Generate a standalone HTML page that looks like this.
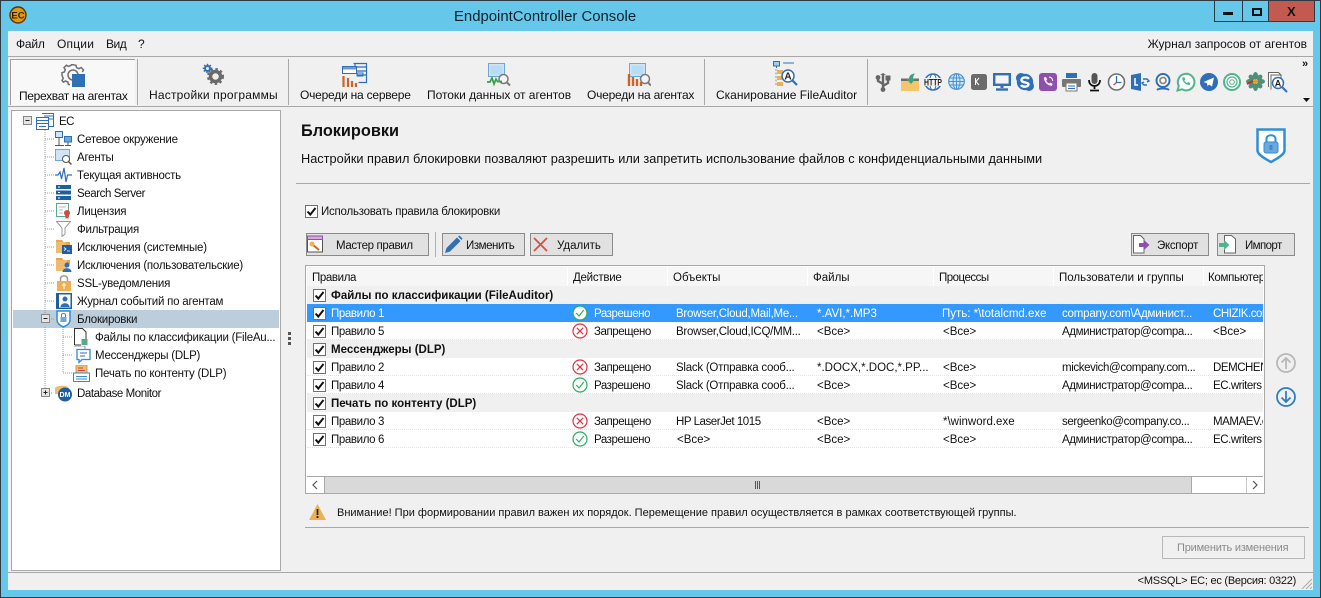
<!DOCTYPE html>
<html><head><meta charset="utf-8"><style>
html,body{margin:0;padding:0;background:#65c8ea;overflow:hidden}
#w{position:relative;width:1321px;height:598px;background:#65c8ea;overflow:hidden;font-family:"Liberation Sans",sans-serif;font-size:12px;color:#111}
#w div,#w span,#w svg{position:absolute}
.t{white-space:nowrap;line-height:18px;height:18px}
.n{font-size:11.5px;letter-spacing:-.23px;margin-top:1px}
.s{font-size:11.5px;margin-top:1px}
.x{letter-spacing:-.38px}
.y{letter-spacing:-.25px}
.c{width:50px;overflow:hidden;letter-spacing:-.45px}
.b{background:#e1e1e1;border:1px solid #8a8a8a;box-sizing:border-box;height:23px}
.h{background:#f6f6f6;top:267px;height:19px}
.g{background:#f0f0f0;left:307px;width:956px;height:18px}
.r{left:307px;width:956px;height:17px;background:#fff;border-bottom:1px dotted #e4e4e4}
.w{color:#fff}
.bo{font-weight:bold}
</style></head><body><div id="w">
<svg width="0" height="0" style="left:0;top:0"><defs>
<symbol id="cb" viewBox="0 0 13 13"><rect x=".5" y=".5" width="12" height="12" fill="#fff" stroke="#707070"/><path d="M2.6 6.6l2.7 3L10.500 3" fill="none" stroke="#111" stroke-width="2"/></symbol>
<symbol id="ok" viewBox="0 0 16 16"><circle cx="8" cy="8" r="7" fill="#fff" stroke="#27ae60" stroke-width="1.2"/><path d="M4.2 8l2.8 3 4.8-6" fill="none" stroke="#27ae60" stroke-width="1.1"/></symbol>
<symbol id="no" viewBox="0 0 16 16"><circle cx="8" cy="8" r="7" fill="#fff" stroke="#e0323c" stroke-width="1.2"/><path d="M4.8 4.8l6.4 6.4M11.2 4.8l-6.4 6.4" fill="none" stroke="#e0323c" stroke-width="1.2"/></symbol>
</defs></svg>

<!-- window frame -->
<div style="left:0;top:0;width:1321px;height:1px;background:#2f3b44"></div>
<div style="left:0;top:0;width:1px;height:598px;background:#2f3b44"></div>
<div style="left:1320px;top:0;width:1px;height:598px;background:#2f3b44"></div>
<div style="left:0;top:597px;width:1321px;height:1px;background:#2f3b44"></div>
<svg style="left:9px;top:6px" width="18" height="18" viewBox="0 0 18 18"><circle cx="9" cy="9" r="8" fill="#e09a10" stroke="#5c3500" stroke-width="1.400"/><text x="9" y="12.500" text-anchor="middle" font-family="Liberation Sans" font-size="9.500" font-weight="bold" fill="#3a2000">EC</text></svg>
<div class="t" style="left:454px;top:7px;font-size:14.9px;line-height:20px;height:20px;color:#10202a">EndpointController Console</div>
<div style="left:1214px;top:1px;width:101px;height:21px;border:1px solid #2f3b44;border-top:0;box-sizing:border-box"></div>
<div style="left:1242px;top:1px;width:1px;height:20px;background:#2f3b44"></div>
<div style="left:1268px;top:1px;width:47px;height:21px;background:#c25a50;border-left:1px solid #2f3b44;border-right:1px solid #2f3b44;border-bottom:1px solid #2f3b44;box-sizing:border-box"></div>
<div style="left:1223px;top:12px;width:10px;height:3px;background:#111"></div>
<div style="left:1252px;top:8px;width:6px;height:4px;border:2px solid #111"></div>
<div class="bo" style="left:1287px;top:4px;font-size:13px;line-height:16px;color:#111">X</div>

<!-- client -->
<div style="left:8px;top:31px;width:1305px;height:559px;background:#f0f0f0"></div>
<div class="t" style="left:16px;top:35px;letter-spacing:-.2px">Файл</div>
<div class="t" style="left:57px;top:35px;letter-spacing:.2px">Опции</div>
<div class="t" style="left:106px;top:35px;letter-spacing:-.5px">Вид</div>
<div class="t" style="left:138px;top:35px">?</div>
<div class="t" style="right:14px;top:35px">Журнал запросов от агентов</div>
<div style="left:8px;top:56px;width:1305px;height:1px;background:#a8a8a8"></div>
<div style="left:8px;top:106px;width:1305px;height:1px;background:#a8a8a8"></div>

<!-- toolbar -->
<div style="left:10px;top:59px;width:125px;height:46px;background:#f8f8f8;border-top:1px solid #a0a0a0;border-left:1px solid #a0a0a0;box-sizing:border-box"></div>
<div style="left:137px;top:59px;width:1px;height:46px;background:#a8a8a8"></div>
<div style="left:288px;top:59px;width:1px;height:46px;background:#a8a8a8"></div>
<div style="left:704px;top:59px;width:1px;height:46px;background:#a8a8a8"></div>
<div style="left:867px;top:59px;width:1px;height:46px;background:#a8a8a8"></div>
<div class="t" style="left:19px;top:87px;letter-spacing:-.32px">Перехват на агентах</div>
<div class="t" style="left:149px;top:86px;letter-spacing:.21px">Настройки программы</div>
<div class="t" style="left:300px;top:86px;letter-spacing:-.22px">Очереди на сервере</div>
<div class="t" style="left:427px;top:86px;letter-spacing:-.04px">Потоки данных от агентов</div>
<div class="t" style="left:587px;top:86px;letter-spacing:-.22px">Очереди на агентах</div>
<div class="t" style="left:716px;top:86px">Сканирование FileAuditor</div>

<svg style="left:60px;top:62px" width="26" height="26" viewBox="0 0 26 26"><path d="M14 3l2 .3.600 2.400 2.400 1 2.100-1.200 2.400 2.400-1.200 2.100M10 22.500H8.400l-.5-2.500-2.400-1-2 1.200L2 18.500l1.200-2.100-.9-2.300L2 13.500V10.700l2.300-.7 1-2.300L4 5.600l2.400-2.400 2.100 1.200 2.300-.9L11.400 2.800H14" fill="none" stroke="#6e6e6e" stroke-width="1.500"/><circle cx="13" cy="13" r="5" fill="none" stroke="#6e6e6e" stroke-width="1.500"/><rect x="12" y="12" width="13" height="13" fill="#2f6fb5"/></svg>
<svg style="left:202px;top:63px" width="22" height="22" viewBox="0 0 22 22"><circle cx="13.500" cy="13.500" r="5" fill="none" stroke="#6a6a6a" stroke-width="3.500"/><circle cx="13.500" cy="13.500" r="7.500" fill="none" stroke="#6a6a6a" stroke-width="2" stroke-dasharray="2.500 2.500"/><circle cx="5.500" cy="5.500" r="2.500" fill="none" stroke="#2f6fb5" stroke-width="2"/><circle cx="5.500" cy="5.500" r="4" fill="none" stroke="#2f6fb5" stroke-width="1.500" stroke-dasharray="1.500 1.500"/></svg>
<svg style="left:342px;top:62px" width="26" height="26" viewBox="0 0 26 26"><path d="M11.500 1.500h13v19h-8M13 1.500v5M13 5h11M15 9h9M15 13h9" fill="none" stroke="#2f6fb5" stroke-width="1.200"/><rect x=".5" y="4.500" width="14" height="7" fill="#fff" stroke="#2f6fb5"/><rect x="1" y="5" width="13" height="2.500" fill="#2f6fb5" opacity=".7"/><rect x="15" y="11" width="6" height="3" fill="none" stroke="#2f6fb5"/><path d="M1.500 14v11M6 16v9M10 19v6M14 21v4" stroke="#c8652a" stroke-width="2.200"/></svg>
<svg style="left:487px;top:62px" width="24" height="26" viewBox="0 0 24 26"><rect x="1.500" y="1.500" width="16" height="13" fill="#cfe5f7" stroke="#6ba8dc"/><rect x="3.500" y="3.500" width="12" height="9" fill="#b6dcf6"/><circle cx="16.500" cy="17" r="4.500" fill="#f4f4f4" stroke="#7a7a7a" stroke-width="1.500"/><path d="M20 20.500l3 3" stroke="#7a7a7a" stroke-width="2"/><path d="M0 20h3l2-4 2 6 2-5 1.500 2.500H15" fill="none" stroke="#35a04a" stroke-width="1.700"/></svg>
<svg style="left:627px;top:62px" width="24" height="26" viewBox="0 0 24 26"><rect x="2.500" y="1.500" width="16" height="13" fill="#cfe5f7" stroke="#6ba8dc"/><rect x="4.500" y="3.500" width="12" height="9" fill="#b6dcf6"/><circle cx="18" cy="17" r="4.500" fill="#f4f4f4" stroke="#7a7a7a" stroke-width="1.500"/><path d="M21 20.500l3 3" stroke="#7a7a7a" stroke-width="2"/><path d="M2 12v12M6 15v9M10 17v7M14 20v4" stroke="#c8652a" stroke-width="2.400"/></svg>
<svg style="left:773px;top:61px" width="26" height="27" viewBox="0 0 26 27"><rect x=".5" y=".5" width="6" height="4.500" fill="#9fcdf0" stroke="#2f6fb5"/><path d="M3.500 5v2M10 2h11" stroke="#2f6fb5"/><path d="M3 8v17" stroke="#999" stroke-dasharray="2 1.500"/><rect x="4" y="9" width="6" height="4" fill="#eeb24c"/><rect x="4" y="15" width="6" height="4" fill="#eeb24c"/><rect x="4" y="21" width="6" height="4" fill="#eeb24c"/><circle cx="15" cy="15" r="6" fill="#fff" stroke="#2f6fb5" stroke-width="1.500"/><text x="15" y="18.500" text-anchor="middle" font-family="Liberation Sans" font-size="10" font-weight="bold" fill="#222">A</text><path d="M19.500 19.500l4.500 4.500" stroke="#2f6fb5" stroke-width="2.200"/></svg>

<!-- small icons -->
<svg style="left:875px;top:73px" width="16" height="19" viewBox="0 0 16 19"><path d="M8 1v16M8 11L3 8V5M8 13l5-3V6" fill="none" stroke="#666" stroke-width="2.400"/><circle cx="8" cy="16.500" r="2.400" fill="#666"/><circle cx="3" cy="4.500" r="2.400" fill="#666"/><rect x="10.500" y="2.500" width="5" height="5" fill="#666"/><path d="M5 2l3-2 3 2z" fill="#666"/></svg>
<svg style="left:901px;top:72px" width="18" height="20" viewBox="0 0 18 20"><path d="M0 7h6v2h12v10H0z" fill="#f5c56c"/><rect y="6.500" width="18" height="2.500" fill="#6d6d6d"/><path d="M14 1.500C9.500 2 8 4 8 7H5.500l4.500 5 4.500-5H12c0-2 .5-3.500 2-5.500z" fill="#3aa37c"/></svg>
<svg style="left:924px;top:73px" width="18" height="18" viewBox="0 0 18 18"><circle cx="9" cy="9" r="8" fill="#fff" stroke="#2f6fb5" stroke-width="1.600"/><ellipse cx="9" cy="9" rx="3.500" ry="8" fill="none" stroke="#2f6fb5"/><rect x="-.5" y="5" width="19" height="8" fill="#f0f0f0"/><text x="9" y="12.500" text-anchor="middle" font-family="Liberation Sans" font-size="9" font-weight="bold" fill="#222" textLength="18" lengthAdjust="spacingAndGlyphs">HTTP</text></svg>
<svg style="left:948px;top:73px" width="17" height="17" viewBox="0 0 17 17"><circle cx="8.500" cy="8.500" r="7.800" fill="#cfe5f7" stroke="#4a93d0" stroke-width="1.200"/><ellipse cx="8.500" cy="8.500" rx="3.500" ry="7.800" fill="none" stroke="#4a93d0"/><path d="M1 8.500h15M2 5h13M2 12h13M8.500 1v15" stroke="#4a93d0"/></svg>
<svg style="left:971px;top:74px" width="16" height="16" viewBox="0 0 16 16"><rect width="16" height="16" rx="2.500" fill="#6a6a6a"/><path d="M4.500 4v7M8 4L5 7.500 8 11" fill="none" stroke="#fff"/></svg>
<svg style="left:993px;top:73px" width="18" height="18" viewBox="0 0 18 18"><rect x="1.200" y="1.200" width="15.600" height="10.600" fill="#f4f4f4" stroke="#2f6fb5" stroke-width="2.400"/><path d="M9 13v2" stroke="#2f6fb5" stroke-width="3"/><path d="M3 16.500h12" stroke="#2f6fb5" stroke-width="2.400"/></svg>
<svg style="left:1016px;top:73px" width="18" height="18" viewBox="0 0 18 18"><circle cx="9" cy="9" r="8.200" fill="#2f6fb5"/><circle cx="5" cy="5" r="5" fill="#2f6fb5"/><circle cx="13" cy="13" r="5" fill="#2f6fb5"/><path d="M13 5.800C11 3.800 5.500 4 5.500 7s7 2 7 4.500S6.500 14.500 5 12" fill="none" stroke="#fff" stroke-width="2.400"/></svg>
<svg style="left:1039px;top:73px" width="18" height="18" viewBox="0 0 18 18"><rect width="18" height="18" rx="3" fill="#8e4fae"/><path d="M5 4.500l2-.5 1.200 2.500-1 1c.5 1.500 1.500 2.500 3 3l1-1 2.400 1.200-.6 2c-4 .5-8.500-4-8-8.300z" fill="#fff"/><path d="M10 4c2 .2 3.500 1.500 3.800 4" fill="none" stroke="#fff"/></svg>
<svg style="left:1062px;top:72px" width="19" height="20" viewBox="0 0 19 20"><rect x="4" y="1" width="11" height="5" fill="#2f6fb5"/><rect x="0" y="7" width="19" height="8" rx="1" fill="#777"/><rect x="4" y="11" width="11" height="8" fill="#fff" stroke="#777"/><path d="M6 14h7M6 16.500h7" stroke="#2f6fb5"/></svg>
<svg style="left:1088px;top:72px" width="13" height="20" viewBox="0 0 13 20"><rect x="3.500" y="1" width="6" height="11" rx="3" fill="#555"/><path d="M1 8c0 8 11 8 11 0M6.500 14v3M2 18.500h9" fill="none" stroke="#111" stroke-width="1.800"/></svg>
<svg style="left:1107px;top:73px" width="19" height="18" viewBox="0 0 19 18"><circle cx="9.500" cy="9" r="8" fill="#fff" stroke="#6e6e6e" stroke-width="1.600"/><path d="M9.500 3v6.500h5" fill="none" stroke="#2f6fb5" stroke-width="1.300"/><path d="M9.500 9.500l-3 2.500" stroke="#d04030" stroke-width="1.300"/></svg>
<svg style="left:1131px;top:73px" width="19" height="18" viewBox="0 0 19 18"><path d="M0 2l10-2v18L0 16z" fill="#2f6fb5"/><path d="M4 5v7h3" fill="none" stroke="#fff" stroke-width="1.500"/><path d="M12 6h4l2 2-2 1M16 12h-3l-2-2 2-1" fill="none" stroke="#2f6fb5" stroke-width="1.400"/></svg>
<svg style="left:1154px;top:73px" width="18" height="18" viewBox="0 0 18 18"><circle cx="9" cy="7.500" r="6.500" fill="#fff" stroke="#2f6fb5" stroke-width="2"/><circle cx="9" cy="7.500" r="3" fill="none" stroke="#888" stroke-width="1.800"/><path d="M3 17c2-2 10-2 12 0" fill="none" stroke="#2f6fb5" stroke-width="2"/></svg>
<svg style="left:1176px;top:72px" width="20" height="20" viewBox="0 0 20 20"><path d="M1.500 18.500l1.300-4.500A8.300 8.300 0 1 1 6 17.300z" fill="#fff" stroke="#4fb58c" stroke-width="2"/><path d="M6.500 5.500l1.800-.5 1 2.500-1 1c.5 1 1.500 2 2.700 2.500l1-1 2.300 1-.4 1.800C10 14 5.500 9 6.500 5.500z" fill="#4fb58c"/></svg>
<svg style="left:1200px;top:73px" width="18" height="18" viewBox="0 0 18 18"><circle cx="9" cy="9" r="9" fill="#2f6fb5"/><path d="M3.500 9L14 4.500l-2 9-3-2-1.500 1.800-.4-3z" fill="#fff"/></svg>
<svg style="left:1223px;top:73px" width="18" height="18" viewBox="0 0 18 18"><circle cx="9" cy="9" r="8" fill="#fff" stroke="#4fb58c" stroke-width="2"/><circle cx="9" cy="9" r="5" fill="none" stroke="#4fb58c" stroke-width="1.200"/><circle cx="9" cy="9" r="2.300" fill="none" stroke="#4fb58c"/></svg>
<svg style="left:1246px;top:72px" width="19" height="19" viewBox="0 0 19 19"><g fill="#4f9078"><ellipse cx="9.500" cy="3.800" rx="2.500" ry="3.800"/><ellipse cx="9.500" cy="15.200" rx="2.500" ry="3.800"/><ellipse cx="3.800" cy="9.500" rx="3.800" ry="2.500"/><ellipse cx="15.200" cy="9.500" rx="3.800" ry="2.500"/><ellipse cx="5.500" cy="5.500" rx="2.500" ry="3.300" transform="rotate(-45 5.500 5.500)"/><ellipse cx="13.500" cy="5.500" rx="2.500" ry="3.300" transform="rotate(45 13.500 5.500)"/><ellipse cx="5.500" cy="13.500" rx="2.500" ry="3.300" transform="rotate(45 5.500 13.500)"/><ellipse cx="13.500" cy="13.500" rx="2.500" ry="3.300" transform="rotate(-45 13.500 13.500)"/></g><circle cx="9.500" cy="9.500" r="2" fill="#e8a020"/><path d="M1 12l6-3" stroke="#c03030" stroke-width="2"/></svg>
<svg style="left:1268px;top:72px" width="21" height="21" viewBox="0 0 21 21"><path d="M.5 15V.5h10l3 3M3 17.500V3h10v4" fill="#fff" stroke="#666"/><circle cx="10" cy="11" r="5.500" fill="#fff" stroke="#2f6fb5" stroke-width="1.500"/><text x="10" y="14.500" text-anchor="middle" font-family="Liberation Sans" font-size="9" font-weight="bold" fill="#222">A</text><path d="M14 15l5 5" stroke="#2f6fb5" stroke-width="2"/></svg>
<div class="bo" style="left:1302px;top:58px;font-size:11px;line-height:12px;letter-spacing:-1px;color:#111">»</div>
<svg style="left:1303px;top:98px" width="7" height="4" viewBox="0 0 7 4"><path d="M0 0h7L3.500 4z" fill="#111"/></svg>

<!-- tree -->
<div style="left:11px;top:110px;width:270px;height:461px;background:#fff;border:1px solid #a8a8a8;box-sizing:border-box"></div>
<div style="left:13px;top:310px;width:266px;height:18px;background:#bccddc"></div>
<svg style="left:20px;top:112px" width="60" height="290" viewBox="0 0 60 290"><g stroke="#999" stroke-dasharray="1 1" fill="none"><path d="M25 18v190M25 27h10M25 45h10M25 63h10M25 81h10M25 99h10M25 117h10M25 135h10M25 153h10M25 171h10M25 189h10M25 207h10M43 215v46M43 225h10M43 243h10M43 261h10"/><path d="M25 215v66M25 281h8"/></g><g fill="#fff" stroke="#888"><rect x="3.500" y="4.500" width="8" height="8" fill="#e4e4e4"/><rect x="21.500" y="202.500" width="8" height="8" fill="#e4e4e4"/><rect x="21.500" y="276.500" width="8" height="8" fill="#e4e4e4"/></g><path d="M5.500 8.500h4M23.500 206.500h4M23.500 280.500h4M25.500 278.500v4" stroke="#222"/></svg>
<svg style="left:36px;top:113px" width="18" height="17" viewBox="0 0 18 17"><path d="M6 .5h11.500v13H13M8 3h9M8 6h9" fill="none" stroke="#2f6fb5"/><rect x=".5" y="4.500" width="12" height="12" fill="#fff" stroke="#2f6fb5"/><path d="M1 7.500h11M1 10.500h11M3 13.500h7" stroke="#2f6fb5"/></svg>
<svg style="left:55px;top:131px" width="17" height="16" viewBox="0 0 17 16"><rect x=".5" y=".5" width="7" height="6" fill="#cfe5f7" stroke="#2f6fb5"/><rect x="9.500" y="5.500" width="7" height="5.500" fill="#6ba8dc" stroke="#2f6fb5"/><path d="M4 7v7M0 14.500h9M13 11v3M10 14.500h6" fill="none" stroke="#555"/></svg>
<svg style="left:55px;top:149px" width="17" height="16" viewBox="0 0 17 16"><rect x=".5" y=".5" width="14" height="11" fill="#cfe5f7" stroke="#6ba8dc"/><circle cx="11" cy="10" r="3.500" fill="#fff" stroke="#555"/><path d="M13.500 12.500l3 3" stroke="#555" stroke-width="1.500"/></svg>
<svg style="left:55px;top:167px" width="17" height="16" viewBox="0 0 17 16"><path d="M0 8h3l2-3 1.500 7L9 1l2 14 1.500-7H17" fill="none" stroke="#2f6fb5" stroke-width="1.200"/></svg>
<svg style="left:56px;top:185px" width="15" height="15" viewBox="0 0 15 15"><rect width="15" height="4" fill="#1f5f9f"/><rect y="5.500" width="15" height="4" fill="#1f5f9f"/><rect y="11" width="15" height="4" fill="#1f5f9f"/><path d="M2 2h2M2 7.500h2M2 13h2" stroke="#fff"/></svg>
<svg style="left:56px;top:203px" width="15" height="16" viewBox="0 0 15 16"><rect x=".5" y=".5" width="12" height="13" fill="#fff" stroke="#5aa88a"/><path d="M3 4h7M3 7h4M3 10h4" stroke="#bbb"/><circle cx="11" cy="10" r="3" fill="#d04a3a"/><path d="M9.500 12.500V16l1.500-1 1.500 1v-3.500" fill="#d04a3a"/></svg>
<svg style="left:56px;top:221px" width="15" height="16" viewBox="0 0 15 16"><path d="M.5.500h14L9 7v6l-3 2.500V7z" fill="#fff" stroke="#999"/></svg>
<svg style="left:56px;top:239px" width="16" height="15" viewBox="0 0 16 15"><path d="M0 1h6l1.500 2H14v4H0z" fill="#e8a44e"/><rect y="3" width="10" height="11" fill="#f1bb6f"/><rect x="6" y="6" width="10" height="9" fill="#1f5f9f"/><path d="M8 8.500l2 1.500-2 1.500M11 12h3" fill="none" stroke="#fff" stroke-width=".8"/></svg>
<svg style="left:56px;top:257px" width="16" height="15" viewBox="0 0 16 15"><path d="M0 1h6l1.500 2H14v4H0z" fill="#e8a44e"/><rect y="3" width="11" height="11" fill="#f1bb6f"/><circle cx="11" cy="8" r="2.500" fill="#2f6fb5"/><path d="M6.500 15c0-5 9-5 9 0z" fill="#2f6fb5"/></svg>
<svg style="left:57px;top:275px" width="14" height="16" viewBox="0 0 14 16"><path d="M3.500 6V3.500c0-3.500 7-3.500 7 0V6" fill="none" stroke="#999" stroke-width="1.500"/><rect y="6" width="14" height="10" fill="#eeb055"/><path d="M7 8v6M5 10h4" stroke="#fff"/></svg>
<svg style="left:56px;top:293px" width="16" height="16" viewBox="0 0 16 16"><rect width="16" height="16" fill="#1f5f9f"/><rect x="3" y="1.500" width="11.500" height="13" fill="#fff"/><circle cx="9" cy="6" r="2.500" fill="#2f6fb5"/><path d="M4.500 14c0-5 9-5 9 0z" fill="#2f6fb5"/></svg>
<svg style="left:56px;top:310px" width="15" height="18" viewBox="0 0 15 18"><path d="M1 1h13v9c0 3-3 5.500-6.500 7C4 15.500 1 13 1 10z" fill="#fff" stroke="#2f8fd0" stroke-width="1.500"/><rect x="4.500" y="7" width="6" height="5" fill="#6ba8dc"/><path d="M5.500 7V5c0-2 4-2 4 0v2" fill="none" stroke="#2f8fd0"/></svg>
<svg style="left:74px;top:328px" width="14" height="18" viewBox="0 0 14 18"><path d="M.5 17V.5h8L12 4v7M.5 17H7" fill="#fff" stroke="#333"/><rect x="7.500" y="11" width="6" height="6" fill="#5aa88a"/></svg>
<svg style="left:74px;top:346px" width="17" height="18" viewBox="0 0 17 18"><path d="M0 0h11v3" fill="none" stroke="#999"/><path d="M3 3.500h13v10H8l-3 3v-3H3z" fill="#fff" stroke="#2f8fd0" stroke-width="1.300"/><path d="M6 7h7M6 10h5" stroke="#2f6fb5"/></svg>
<svg style="left:73px;top:365px" width="17" height="17" viewBox="0 0 17 17"><rect x="3" y="0" width="11" height="8" fill="#f1bb6f" stroke="#e09840"/><path d="M5 3h5M5 5.500h7" stroke="#d04a3a"/><rect x=".5" y="8" width="16" height="8.500" fill="#fff" stroke="#2f8fd0"/><path d="M3 11.500h11M3 14h11" stroke="#2f8fd0"/></svg>
<svg style="left:55px;top:385px" width="17" height="17" viewBox="0 0 17 17"><path d="M0 3c2-3 12-3 14 0v6H0z" fill="#f1bb6f"/><circle cx="10" cy="9.500" r="7" fill="#1f5f9f"/><text x="10" y="12" text-anchor="middle" font-family="Liberation Sans" font-size="7" font-weight="bold" fill="#fff">DM</text></svg>

<div class="t n" style="left:59px;top:112px;letter-spacing:-.5px">EC</div>
<div class="t n" style="left:77px;top:130px">Сетевое окружение</div>
<div class="t n" style="left:77px;top:148px">Агенты</div>
<div class="t n" style="left:77px;top:166px">Текущая активность</div>
<div class="t n" style="left:77px;top:184px;letter-spacing:-.42px">Search Server</div>
<div class="t n" style="left:77px;top:202px">Лицензия</div>
<div class="t n" style="left:77px;top:220px">Фильтрация</div>
<div class="t n" style="left:77px;top:238px">Исключения (системные)</div>
<div class="t n" style="left:77px;top:256px">Исключения (пользовательские)</div>
<div class="t n" style="left:77px;top:274px">SSL-уведомления</div>
<div class="t n" style="left:77px;top:292px">Журнал событий по агентам</div>
<div class="t n" style="left:77px;top:310px">Блокировки</div>
<div class="t n" style="left:95px;top:328px">Файлы по классификации (FileAu...</div>
<div class="t n" style="left:95px;top:346px">Мессенджеры (DLP)</div>
<div class="t n" style="left:95px;top:364px">Печать по контенту (DLP)</div>
<div class="t n" style="left:77px;top:384px;letter-spacing:-.42px">Database Monitor</div>
<div style="left:288px;top:332px;width:3px;height:3px;background:#555"></div>
<div style="left:288px;top:337px;width:3px;height:3px;background:#555"></div>
<div style="left:288px;top:342px;width:3px;height:3px;background:#555"></div>

<!-- header -->
<div class="t bo" style="left:301px;top:121px;font-size:16.300px;line-height:20px;height:20px">Блокировки</div>
<div class="t" style="left:301px;top:150px;font-size:12.750px">Настройки правил блокировки позваляют разрешить или запретить использование файлов с конфиденциальными данными</div>
<svg style="left:1256px;top:128px" width="30" height="36" viewBox="0 0 30 36"><path d="M1.500 1.500h27v21c0 4-7 8-13.500 11.500C8.500 30.500 1.500 26.500 1.500 22.500z" fill="#fff" stroke="#2f8fd0" stroke-width="2.500"/><rect x="8" y="14" width="14" height="11" rx="2" fill="#6ba8dc" stroke="#2f8fd0"/><path d="M10.500 14v-3c0-5 9-5 9 0v3" fill="none" stroke="#2f8fd0" stroke-width="2"/><rect x="13.500" y="17" width="3" height="5" fill="#2f8fd0"/></svg>
<div style="left:296px;top:183px;width:1014px;height:1px;background:#a8a8a8"></div>

<svg style="left:305px;top:205px" width="13" height="13"><use href="#cb"/></svg>
<div class="t n" style="left:321px;top:202px">Использовать правила блокировки</div>

<!-- buttons -->
<div class="b" style="left:306px;top:233px;width:123px"></div>
<div class="t" style="left:336px;top:237px;font-size:11.500px;letter-spacing:-.35px">Мастер правил</div>
<svg style="left:307px;top:235px" width="17" height="18" viewBox="0 0 17 18"><path d="M.5 4h15v13H.5z" fill="#fff" stroke="#555"/><rect x=".5" y="1" width="15" height="3.500" fill="#d7a8d8" stroke="#8e4fae"/><path d="M5 9l7 6" stroke="#c8652a" stroke-width="2"/><circle cx="5" cy="9" r="2.500" fill="#eeb24c"/></svg>
<div style="left:435px;top:232px;width:1px;height:25px;background:#b0b0b0"></div>
<div class="b" style="left:442px;top:233px;width:83px"></div>
<svg style="left:444px;top:235px" width="19" height="19" viewBox="0 0 19 19"><path d="M1 18l1.500-5L13 2.500l3.500 3.500L6 16.500z" fill="#2f6fb5"/><path d="M14 1.500l1.500-1 3 3-1 1.500z" fill="#2f6fb5"/></svg>
<div class="t" style="left:466px;top:237px;font-size:11.500px;letter-spacing:-.45px">Изменить</div>
<div class="b" style="left:530px;top:233px;width:83px"></div>
<svg style="left:533px;top:237px" width="15" height="15" viewBox="0 0 15 15"><path d="M1 1l13 13M14 1L1 14" stroke="#e04a3a" stroke-width="1.700"/></svg>
<div class="t" style="left:557px;top:237px;font-size:11.500px">Удалить</div>
<div class="b" style="left:1131px;top:233px;width:78px"></div>
<svg style="left:1133px;top:235px" width="17" height="19" viewBox="0 0 17 19"><path d="M.5.500h7l3.500 3.500v14H.5z" fill="#fff" stroke="#666"/><path d="M6 8h5V5l5.500 5-5.500 5v-3H6z" fill="#8e4fae"/></svg>
<div class="t" style="left:1157px;top:237px;font-size:11.500px;letter-spacing:-.3px">Экспорт</div>
<div class="b" style="left:1217px;top:233px;width:78px"></div>
<svg style="left:1219px;top:235px" width="17" height="19" viewBox="0 0 17 19"><path d="M5.500.500h7l4 3.500v14h-11z" fill="#fff" stroke="#666"/><path d="M0 8h5V5l5.500 5L5 15v-3H0z" fill="#4fb58c"/></svg>
<div class="t" style="left:1245px;top:237px;font-size:11.500px;letter-spacing:-.6px">Импорт</div>

<!-- table -->
<div style="left:305px;top:265px;width:960px;height:229px;background:#fff;border:1px solid #a8a8a8;box-sizing:border-box;overflow:hidden"></div>
<div class="h" style="left:307px;width:260px"></div>
<div class="h" style="left:568px;width:99px"></div>
<div class="h" style="left:668px;width:139px"></div>
<div class="h" style="left:808px;width:125px"></div>
<div class="h" style="left:934px;width:119px"></div>
<div class="h" style="left:1054px;width:149px"></div>
<div class="h" style="left:1204px;width:59px"></div>
<div class="t s x" style="left:312px;top:268px">Правила</div>
<div class="t s y" style="left:573px;top:268px">Действие</div>
<div class="t s" style="left:673px;top:268px">Объекты</div>
<div class="t s" style="left:813px;top:268px">Файлы</div>
<div class="t s" style="left:939px;top:268px;letter-spacing:-.5px">Процессы</div>
<div class="t s" style="left:1059px;top:268px">Пользователи и группы</div>
<div class="t s" style="left:1208px;top:268px;width:55px;overflow:hidden;letter-spacing:-.3px">Компьютеры</div>

<div class="g" style="top:286px"></div>
<div style="left:307px;top:304px;width:956px;height:18px;background:#3399ff"></div>
<div class="r" style="top:322px"></div>
<div class="g" style="top:340px"></div>
<div class="r" style="top:358px"></div>
<div class="r" style="top:376px"></div>
<div class="g" style="top:394px"></div>
<div class="r" style="top:412px"></div>
<div class="r" style="top:430px"></div>

<svg style="left:313px;top:289px" width="13" height="13"><use href="#cb"/></svg>
<svg style="left:313px;top:307px" width="13" height="13"><use href="#cb"/></svg>
<svg style="left:313px;top:325px" width="13" height="13"><use href="#cb"/></svg>
<svg style="left:313px;top:343px" width="13" height="13"><use href="#cb"/></svg>
<svg style="left:313px;top:361px" width="13" height="13"><use href="#cb"/></svg>
<svg style="left:313px;top:379px" width="13" height="13"><use href="#cb"/></svg>
<svg style="left:313px;top:397px" width="13" height="13"><use href="#cb"/></svg>
<svg style="left:313px;top:415px" width="13" height="13"><use href="#cb"/></svg>
<svg style="left:313px;top:433px" width="13" height="13"><use href="#cb"/></svg>
<div class="t s bo" style="left:331px;top:286px">Файлы по классификации (FileAuditor)</div>
<div class="t s bo" style="left:331px;top:340px">Мессенджеры (DLP)</div>
<div class="t s bo" style="left:331px;top:394px">Печать по контенту (DLP)</div>

<div class="t s w x" style="left:331px;top:304px">Правило 1</div>
<svg style="left:572px;top:305px" width="16" height="16"><use href="#ok"/></svg>
<div class="t s w" style="left:594px;top:304px;letter-spacing:-.44px">Разрешено</div>
<div class="t s w y" style="left:676px;top:304px">Browser,Cloud,Mail,Me...</div>
<div class="t s w" style="left:817px;top:304px">*.AVI,*.MP3</div>
<div class="t s w" style="left:942px;top:304px">Путь: *\totalcmd.exe</div>
<div class="t s w" style="left:1062px;top:304px;letter-spacing:-.2px">company.com\Админист...</div>
<div class="t s w c" style="left:1213px;top:304px">CHIZIK.com</div>

<div class="t s x" style="left:331px;top:322px">Правило 5</div>
<svg style="left:572px;top:323px" width="16" height="16"><use href="#no"/></svg>
<div class="t s" style="left:594px;top:322px;letter-spacing:-.44px">Запрещено</div>
<div class="t s y" style="left:676px;top:322px">Browser,Cloud,ICQ/MM...</div>
<div class="t s" style="left:817px;top:322px">&lt;Все&gt;</div>
<div class="t s" style="left:943px;top:322px">&lt;Все&gt;</div>
<div class="t s x" style="left:1062px;top:322px">Администратор@compa...</div>
<div class="t s" style="left:1213px;top:322px">&lt;Все&gt;</div>

<div class="t s x" style="left:331px;top:358px">Правило 2</div>
<svg style="left:572px;top:359px" width="16" height="16"><use href="#no"/></svg>
<div class="t s" style="left:594px;top:358px;letter-spacing:-.44px">Запрещено</div>
<div class="t s y" style="left:676px;top:358px">Slack (Отправка сооб...</div>
<div class="t s" style="left:817px;top:358px">*.DOCX,*.DOC,*.PP...</div>
<div class="t s" style="left:943px;top:358px">&lt;Все&gt;</div>
<div class="t s x" style="left:1062px;top:358px">mickevich@company.com...</div>
<div class="t s c" style="left:1213px;top:358px">DEMCHENKO</div>

<div class="t s x" style="left:331px;top:376px">Правило 4</div>
<svg style="left:572px;top:377px" width="16" height="16"><use href="#ok"/></svg>
<div class="t s" style="left:594px;top:376px;letter-spacing:-.44px">Разрешено</div>
<div class="t s y" style="left:676px;top:376px">Slack (Отправка сооб...</div>
<div class="t s" style="left:817px;top:376px">&lt;Все&gt;</div>
<div class="t s" style="left:943px;top:376px">&lt;Все&gt;</div>
<div class="t s x" style="left:1062px;top:376px">Администратор@compa...</div>
<div class="t s c" style="left:1213px;top:376px">EC.writers</div>

<div class="t s x" style="left:331px;top:412px">Правило 3</div>
<svg style="left:572px;top:413px" width="16" height="16"><use href="#no"/></svg>
<div class="t s" style="left:594px;top:412px;letter-spacing:-.44px">Запрещено</div>
<div class="t s" style="left:676px;top:412px;letter-spacing:-.45px">HP LaserJet 1015</div>
<div class="t s" style="left:817px;top:412px">&lt;Все&gt;</div>
<div class="t s" style="left:943px;top:412px">*\winword.exe</div>
<div class="t s x" style="left:1062px;top:412px">sergeenko@company.co...</div>
<div class="t s c" style="left:1213px;top:412px">MAMAEV.com</div>

<div class="t s x" style="left:331px;top:430px">Правило 6</div>
<svg style="left:572px;top:431px" width="16" height="16"><use href="#ok"/></svg>
<div class="t s" style="left:594px;top:430px;letter-spacing:-.44px">Разрешено</div>
<div class="t s" style="left:677px;top:430px">&lt;Все&gt;</div>
<div class="t s" style="left:817px;top:430px">&lt;Все&gt;</div>
<div class="t s" style="left:943px;top:430px">&lt;Все&gt;</div>
<div class="t s x" style="left:1062px;top:430px">Администратор@compa...</div>
<div class="t s c" style="left:1213px;top:430px">EC.writers</div>

<!-- scrollbar -->
<div style="left:307px;top:476px;width:956px;height:1px;background:#a8a8a8"></div>
<div style="left:324px;top:477px;width:868px;height:16px;background:#d9d9d9;border-left:1px solid #a8a8a8;border-right:1px solid #a8a8a8;box-sizing:border-box"></div>
<div style="left:1246px;top:477px;width:1px;height:16px;background:#c8c8c8"></div>
<svg style="left:312px;top:480px" width="6" height="10" viewBox="0 0 6 10"><path d="M5 1L1 5l4 4" fill="none" stroke="#555" stroke-width="1.200"/></svg>
<svg style="left:1252px;top:480px" width="6" height="10" viewBox="0 0 6 10"><path d="M1 1l4 4-4 4" fill="none" stroke="#555" stroke-width="1.200"/></svg>
<div style="left:755px;top:481px;width:1px;height:8px;background:#555"></div>
<div style="left:757px;top:481px;width:1px;height:8px;background:#555"></div>
<div style="left:759px;top:481px;width:1px;height:8px;background:#555"></div>

<svg style="left:1276px;top:353px" width="20" height="20" viewBox="0 0 20 20"><circle cx="10" cy="10" r="9" fill="none" stroke="#b8b8b8" stroke-width="1.800"/><path d="M10 16V5M5.500 9.500L10 5l4.500 4.500" fill="none" stroke="#b8b8b8" stroke-width="1.800"/></svg>
<svg style="left:1276px;top:387px" width="20" height="20" viewBox="0 0 20 20"><circle cx="10" cy="10" r="9" fill="none" stroke="#2f7fbf" stroke-width="1.800"/><path d="M10 4v11M5.500 10.500L10 15l4.500-4.500" fill="none" stroke="#2f7fbf" stroke-width="1.800"/></svg>

<!-- warning -->
<svg style="left:309px;top:504px" width="17" height="16" viewBox="0 0 17 16"><path d="M8.500 0L17 16H0z" fill="#eeb055"/><path d="M8.500 5v6" stroke="#222" stroke-width="1.800"/><circle cx="8.500" cy="13" r="1.100" fill="#222"/></svg>
<div class="t" style="left:337px;top:504px;font-size:11px">Внимание! При формировании правил важен их порядок. Перемещение правил осуществляется в рамках соответствующей группы.</div>
<div style="left:305px;top:527px;width:1004px;height:1px;background:#a8a8a8"></div>
<div style="left:1162px;top:536px;width:143px;height:23px;border:1px solid #b8b8b8;box-sizing:border-box"></div>
<div class="t" style="left:1177px;top:539px;color:#8a8a8a;font-size:11px;letter-spacing:-.2px">Применить изменения</div>

<!-- status -->
<div style="left:8px;top:572px;width:1305px;height:1px;background:#a8a8a8"></div>
<div class="t" style="right:25px;top:572px;font-size:11px;letter-spacing:-.25px">&lt;MSSQL&gt; EC; ec (Версия: 0322)</div>
<svg style="left:1302px;top:579px" width="10" height="10" viewBox="0 0 10 10"><path d="M0 10L10 0M4 10l6-6M8 10l2-2" stroke="#aaa"/></svg>
</div></body></html>
